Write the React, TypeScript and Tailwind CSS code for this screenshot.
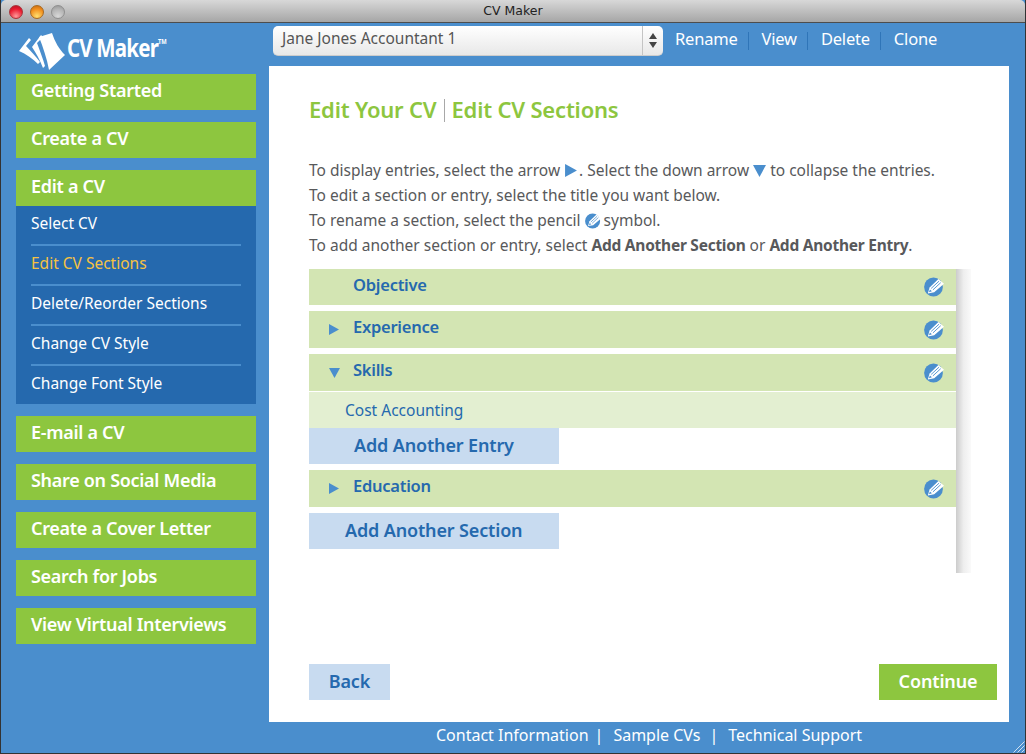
import React from "react";

const font = { fontFamily: '"Noto Sans", "Open Sans", sans-serif' };

function Pencil({ size = 20 }: { size?: number }) {
  return (
    <svg width={size} height={size} viewBox="0 0 20 20" className="shrink-0">
      <circle cx="9.5" cy="10" r="9.4" fill="#4a8ecd" />
      <path d="M3.8 16.4 L5.6 10.4 L14.4 2 L20 6.8 L10.2 15.2 Z" fill="#ffffff" />
      <path d="M5 15.2 L5.9 12.4 L7.9 14.2 Z" fill="#4a8ecd" />
      <path d="M7.2 11.4 L15 4.2 M8.9 12.9 L16.7 5.7" stroke="#4a8ecd" strokeWidth="0.9" fill="none" />
    </svg>
  );
}

function Right({ size = 10 }: { size?: number }) {
  return (
    <svg width={size} height={size + 1} viewBox="0 0 10 11" className="shrink-0">
      <path d="M0 0 L10 5.5 L0 11 Z" fill="#4a8ecd" />
    </svg>
  );
}

function Down({ size = 11 }: { size?: number }) {
  return (
    <svg width={size} height={size - 1} viewBox="0 0 11 10" className="shrink-0">
      <path d="M0 0 L11 0 L5.5 10 Z" fill="#4a8ecd" />
    </svg>
  );
}

function Logo() {
  return (
    <svg width="52" height="44" viewBox="1 0 52 44" className="shrink-0">
      <path d="M24 7 L37 3 C40 12 44 19 50 25 L34 40 C32 29 28 17 24 7 Z" fill="#fff" />
      <path d="M17 17 L26 5 L28 7 L22 13 C25 21 28 29 30 36 L28 38 C25 30 21 23 17 17 Z" fill="#fff" />
      <path d="M4 21 L14 8 L16 10 L11 16 C16 21 21 27 25 32 L23 34 C18 29 11 24 4 21 Z" fill="#fff" />
    </svg>
  );
}

function NavItem({ label }: { label: string }) {
  return (
    <div className="h-9 bg-[#8dc63f] flex items-center pl-[15px] pb-1 text-white text-[18px] tracking-[-0.3px] font-semibold whitespace-nowrap">
      {label}
    </div>
  );
}

function SubItem({ label, active, last }: { label: string; active?: boolean; last?: boolean }) {
  return (
    <div className={`mx-[15px] pb-[3px] flex items-center text-[15.5px] ${last ? "h-[38px]" : "h-10 border-b-2 border-[#4a8ecd]"} ${active ? "text-[#f5c242]" : "text-white"}`}>
      {label}
    </div>
  );
}

function Row({ label, arrow, short }: { label: string; arrow?: "right" | "down"; short?: boolean }) {
  return (
    <div className={`${short ? "h-9" : "h-[37px]"} bg-[#d3e5b3] flex items-center`}>
      <div className="w-11 pl-5 flex items-center">
        {arrow === "right" && <Right />}
        {arrow === "down" && <Down />}
      </div>
      <div className={`flex-1 text-[#2569ae] text-[16.5px] tracking-[-0.25px] font-semibold ${short ? "-mt-[3px]" : "-mt-[5px]"}`}>{label}</div>
      <div className="pr-3">
        <Pencil />
      </div>
    </div>
  );
}

export default function App() {
  return (
    <div style={font} className="relative w-[1026px] h-[754px] overflow-hidden flex flex-col bg-[#4a8ecd] border-x border-b border-[#333]">
      {/* Title bar */}
      <div className="relative h-[23px] shrink-0 flex items-center justify-center rounded-t-[5px] bg-gradient-to-b from-[#d8d8d8] to-[#a6a6a6] border-b border-[#4d4d4d]">
        <div className="absolute left-[8px] top-[5px] flex gap-[7px]">
          <span className="w-[14px] h-[14px] rounded-full bg-[radial-gradient(circle_at_50%_85%,#ff9a9a,#ea1c30_60%,#b00f20)] border border-[#a8343a]" />
          <span className="w-[14px] h-[14px] rounded-full bg-[radial-gradient(circle_at_50%_85%,#ffe070,#f2901e_60%,#c06410)] border border-[#a86a20]" />
          <span className="w-[14px] h-[14px] rounded-full bg-[radial-gradient(circle_at_50%_85%,#d8d8d8,#b4b4b4_60%,#929292)] border border-[#8f8f8f]" />
        </div>
        <span className="text-[12.5px] text-[#222] pt-px" style={{ fontFamily: '"DejaVu Sans", sans-serif' }}>CV Maker</span>
      </div>

      {/* Body */}
      <div className="flex-1 flex min-h-0">
        {/* Sidebar */}
        <div className="w-[268px] shrink-0 pl-[15px] pr-[13px]">
          <div className="h-[51px] flex items-start pt-[7px] text-white">
            <Logo />
            <span className="font-bold text-[25px] leading-none tracking-[-1px] mt-[5px] -ml-px origin-left scale-x-[0.82] whitespace-nowrap">
              CV Maker<sup className="text-[7px] font-bold align-super tracking-normal">TM</sup>
            </span>
          </div>
          <div className="flex flex-col gap-3">
            <NavItem label="Getting Started" />
            <NavItem label="Create a CV" />
            <div>
              <NavItem label="Edit a CV" />
              <div className="bg-[#2569ae]">
                <SubItem label="Select CV" />
                <SubItem label="Edit CV Sections" active />
                <SubItem label="Delete/Reorder Sections" />
                <SubItem label="Change CV Style" />
                <SubItem label="Change Font Style" last />
              </div>
            </div>
            <NavItem label="E-mail a CV" />
            <NavItem label="Share on Social Media" />
            <NavItem label="Create a Cover Letter" />
            <NavItem label="Search for Jobs" />
            <NavItem label="View Virtual Interviews" />
          </div>
        </div>

        {/* Right column */}
        <div className="w-[740px] shrink-0 flex flex-col">
          {/* Top bar */}
          <div className="h-[43px] shrink-0 flex items-start pt-[3px] pl-1">
            <div className="w-[390px] h-[30px] rounded-[5px] bg-gradient-to-b from-[#ffffff] to-[#e8e8e8] flex items-center border-b border-[#ccc]">
              <span className="flex-1 pl-[9px] pb-[4px] text-[15.5px] text-[#555]">Jane Jones Accountant 1</span>
              <div className="w-[21px] h-full border-l border-[#c4c4c4] flex flex-col items-center justify-center gap-[3px]">
                <span className="w-0 h-0 border-x-[4px] border-x-transparent border-b-[6px] border-b-[#444]" />
                <span className="w-0 h-0 border-x-[4px] border-x-transparent border-t-[6px] border-t-[#444]" />
              </div>
            </div>
            <div className="flex items-center text-white text-[16.5px] tracking-[-0.2px] h-[30px] ml-3">
              <span className="-mt-1">Rename</span>
              <span className="w-px h-[18px] bg-[#2f75b8] ml-[10px] mr-[13px]" />
              <span className="-mt-1">View</span>
              <span className="w-px h-[18px] bg-[#2f75b8] ml-[10px] mr-[13px]" />
              <span className="-mt-1">Delete</span>
              <span className="w-px h-[18px] bg-[#2f75b8] ml-[10px] mr-[13px]" />
              <span className="-mt-1">Clone</span>
            </div>
          </div>

          {/* Panel */}
          <div className="h-[656px] shrink-0 bg-white pl-10 pr-3 flex flex-col">
            <div className="pt-[1px] h-[85px] flex items-center text-[#8dc63f] text-[22px] tracking-[-0.2px] font-semibold shrink-0">
              <span>Edit Your CV</span>
              <span className="w-px h-[23px] bg-[#a8a8a8] mx-[7px] mt-[2px]" />
              <span>Edit CV Sections</span>
            </div>
            <div className="mt-[7px] text-[#58595b] text-[15.5px] leading-[25px] whitespace-nowrap shrink-0">
              <div className="flex items-center">
                <span>To display entries, select the arrow</span>
                <span className="ml-[5px]"><Right size={12} /></span>
                <span className="ml-[2px]">. Select the down arrow</span>
                <span className="ml-[4px]"><Down size={13} /></span>
                <span className="ml-[4px]">to collapse the entries.</span>
              </div>
              <div>To edit a section or entry, select the title you want below.</div>
              <div className="flex items-center">
                <span>To rename a section, select the pencil</span>
                <span className="ml-[4px]"><Pencil size={16} /></span>
                <span className="ml-[3px]">symbol.</span>
              </div>
              <div>
                To add another section or entry, select <b className="font-bold tracking-[-0.25px]">Add Another Section</b> or <b className="font-bold tracking-[-0.25px]">Add Another Entry</b>.
              </div>
            </div>

            <div className="mt-[11px] flex h-[304px] shrink-0">
              <div className="w-[647px] flex flex-col gap-[6px]">
                <Row label="Objective" short />
                <Row label="Experience" arrow="right" />
                <div>
                  <Row label="Skills" arrow="down" />
                  <div className="h-9 mt-px pt-px bg-[#e3efd1] flex items-center pl-9 text-[#2569ae] text-[15.5px]">Cost Accounting</div>
                  <div className="w-[250px] h-9 bg-[#c8dbf0] flex items-center pl-[45px] pb-[2px] text-[#2569ae] text-[18px] tracking-[-0.15px] font-semibold">Add Another Entry</div>
                </div>
                <Row label="Education" arrow="right" />
                <div className="w-[250px] h-9 bg-[#c8dbf0] flex items-center pl-9 pb-[2px] text-[#2569ae] text-[18px] tracking-[-0.15px] font-semibold">Add Another Section</div>
              </div>
              <div className="w-[15px] bg-gradient-to-r from-[#cccccc] via-[#eeeeee] to-[#fafafa]" />
            </div>

            <div className="mt-[91px] flex justify-between">
              <div className="w-[81px] h-9 bg-[#c8dbf0] flex items-center justify-center pb-[2px] text-[#2569ae] text-[18px] tracking-[-0.15px] font-semibold">Back</div>
              <div className="w-[118px] h-9 bg-[#8dc63f] flex items-center justify-center pb-[2px] text-white text-[18px] tracking-[-0.15px] font-semibold">Continue</div>
            </div>
          </div>

          {/* Footer */}
          <div className="flex-1 flex items-center pb-[6px] text-white text-[16px] pl-[167px] whitespace-nowrap">
            <span>Contact Information</span>
            <span className="ml-[6px] mr-[10px]">|</span>
            <span>Sample CVs</span>
            <span className="ml-[9px] mr-[10px]">|</span>
            <span>Technical Support</span>
          </div>
        </div>
      </div>
      <svg width="13" height="13" viewBox="0 0 13 13" className="absolute right-0 bottom-0">
        <path d="M12.5 1.5 L1.5 12.5 M12.5 5.5 L5.5 12.5 M12.5 9.5 L9.5 12.5" stroke="#cfe0f0" strokeWidth="1" fill="none" />
      </svg>
    </div>
  );
}
